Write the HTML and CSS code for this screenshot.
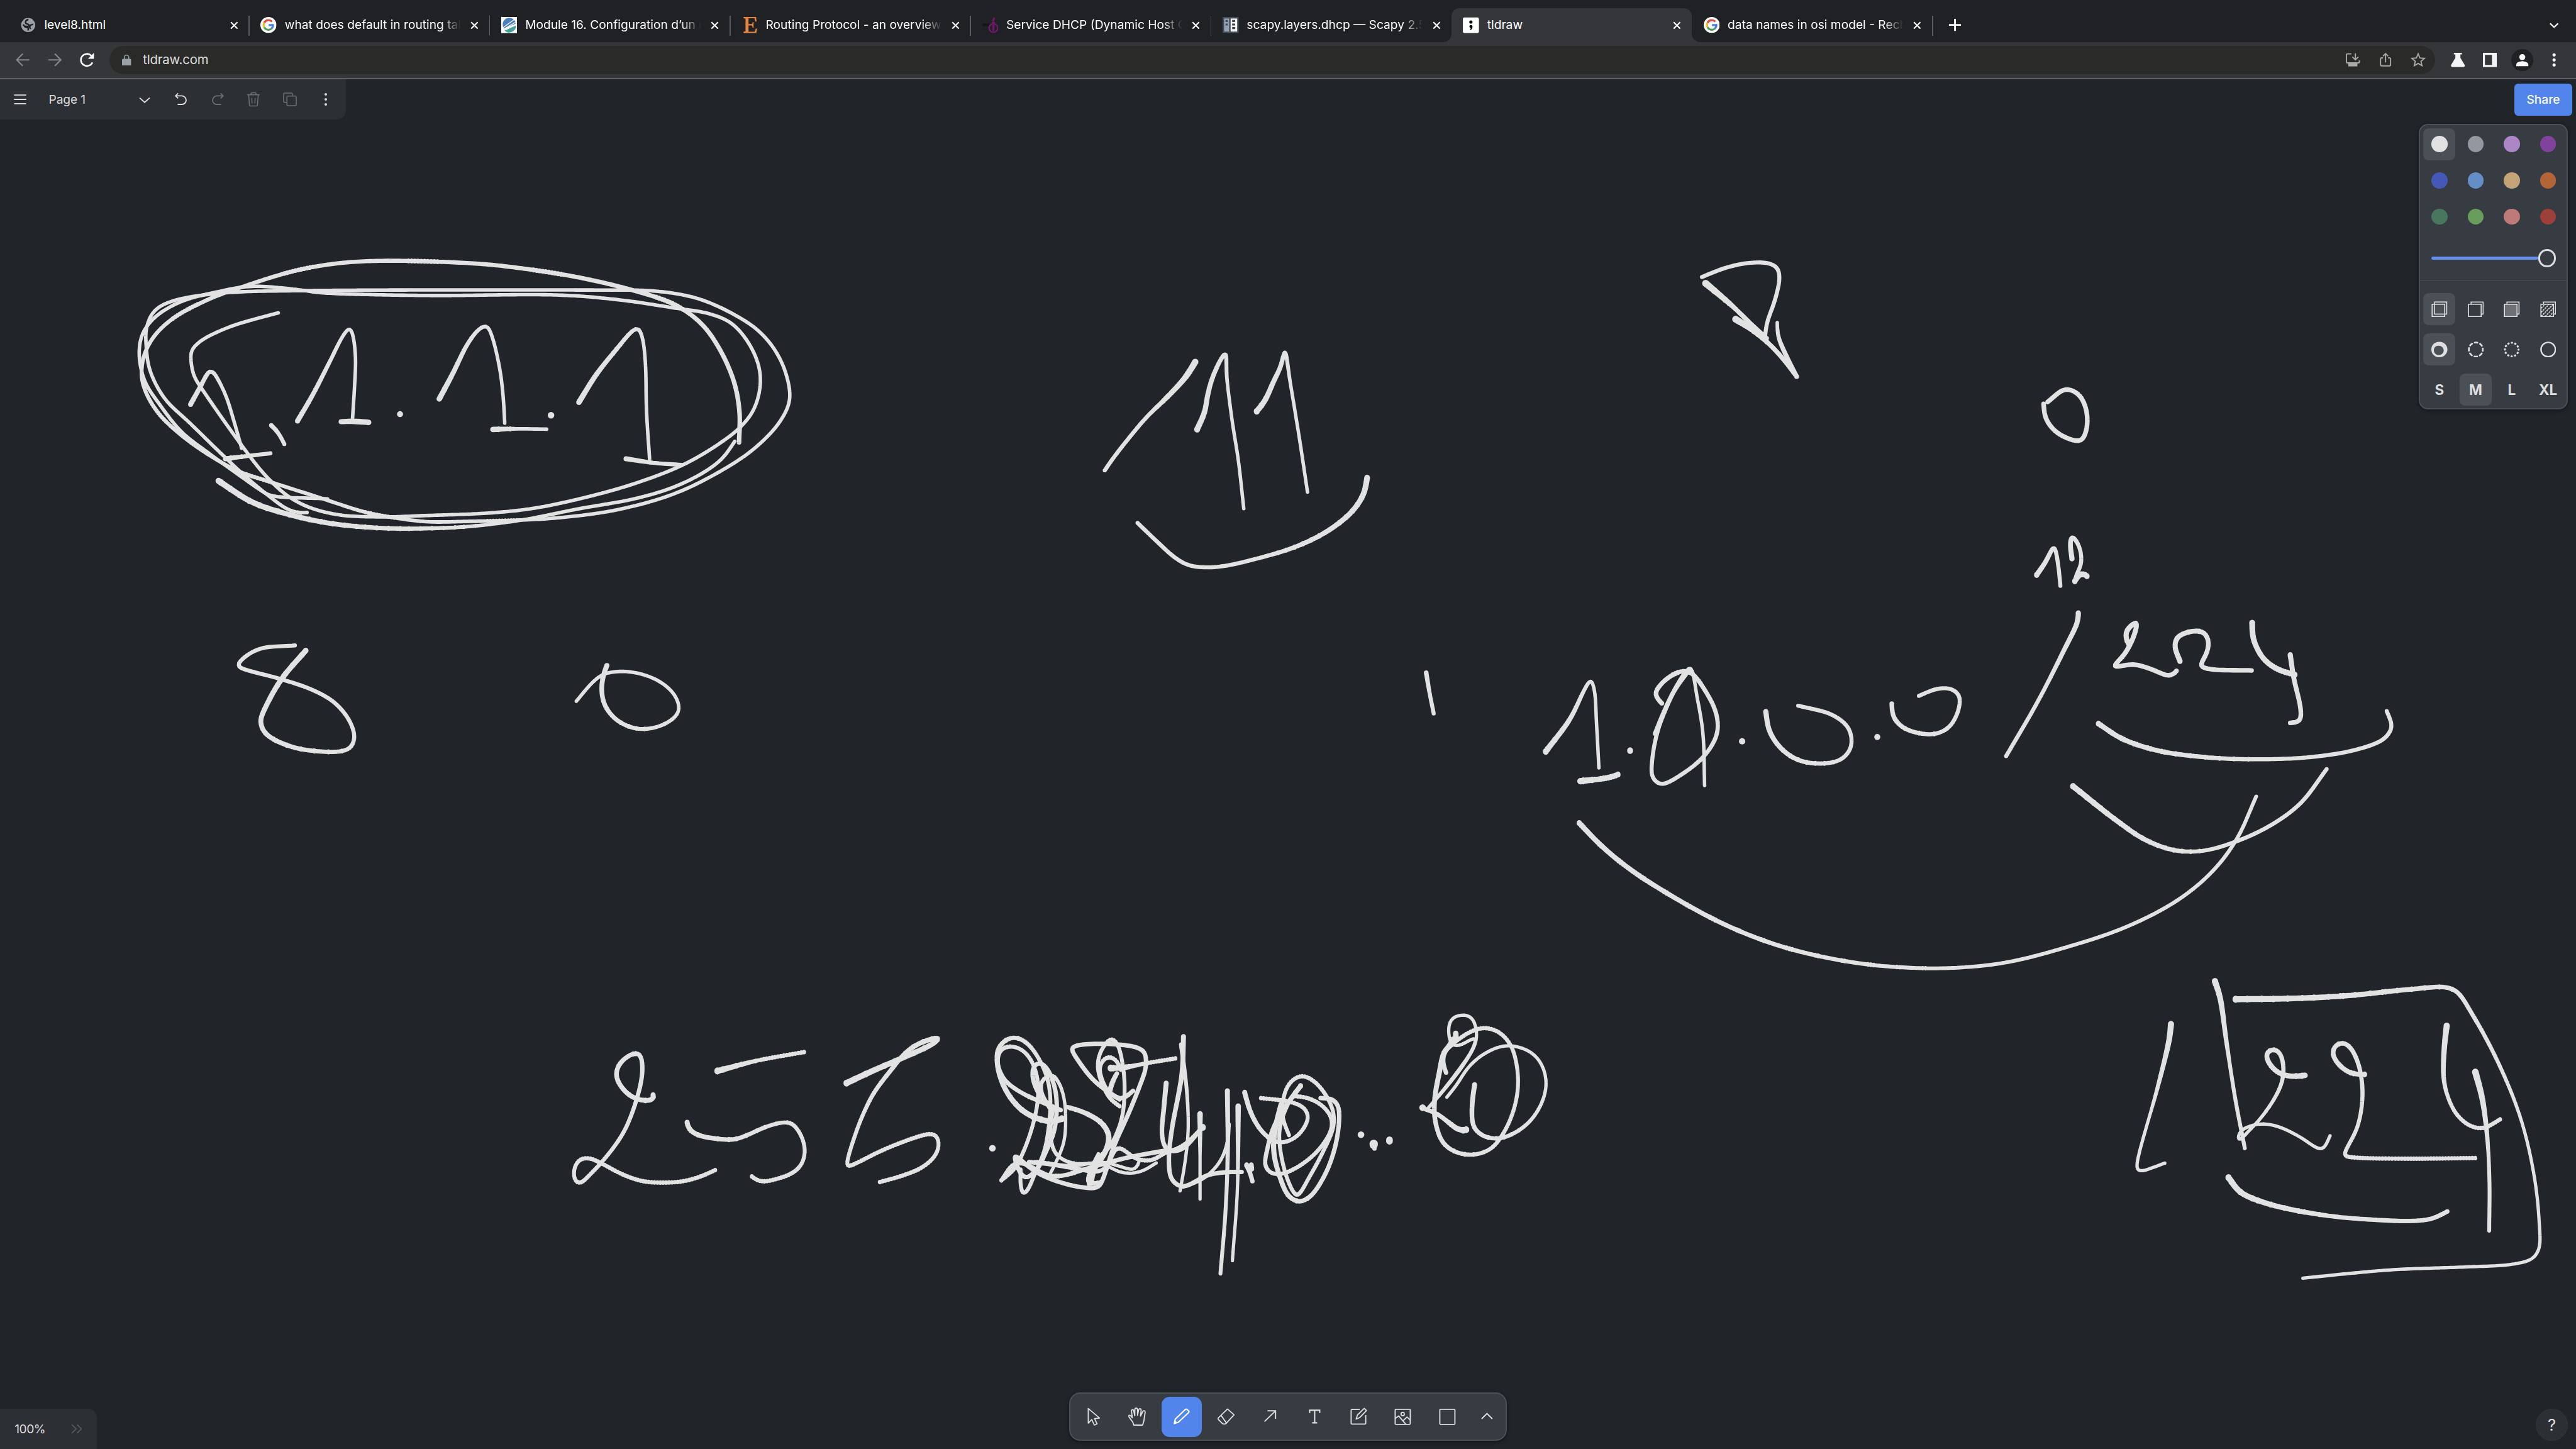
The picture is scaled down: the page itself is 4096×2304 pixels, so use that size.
FILE: index.html
```html
<!DOCTYPE html>
<html lang="en">
<head>
<meta charset="utf-8">
<title>tldraw</title>
<link rel="stylesheet" href="styles.css">
</head>
<body>
<div class="app">
<svg class="defs" width="0" height="0">
  <symbol id="google" viewBox="0 0 32 32">
    <circle cx="16" cy="16" r="16" fill="#fff"/>
    <path d="M7.6 11.6A9.5 9.5 0 0 1 23 9.2" fill="none" stroke="#dd4b3e" stroke-width="4"/>
    <path d="M7.6 11.6a9.5 9.5 0 0 0 0 8.8" fill="none" stroke="#f5bb1b" stroke-width="4"/>
    <path d="M7.6 20.4a9.5 9.5 0 0 0 14.8 2.6" fill="none" stroke="#4ea254" stroke-width="4"/>
    <path d="M16.5 14h10.6c.5 4-.7 7.6-3.4 10.300l-3.200-2.500c1.300-1 2-2.300 2.300-3.700h-6.300z" fill="#4a7fec"/>
  </symbol>
  <symbol id="close" viewBox="0 0 16 16"><path d="M1.500 1.500l13 13M14.500 1.500l-13 13" fill="none" stroke="#fff" stroke-width="2.600"/></symbol>
</svg>

<header class="tabs">
  <div class="tab">
    <svg class="fav" viewBox="0 0 32 32"><circle cx="16" cy="16" r="14" fill="#9aa0a6"/><path d="M16.500 5c-5 1-6.500 4-5.500 7 1.500 3 6 1 6.500 4.500.3 3-3.500 2.500-7.500 2M6 15l4 5 6 1.500V27M26 14.500l-6 2-1 4.500 2 3" fill="none" stroke="#202124" stroke-width="3"/></svg>
    <span class="title">level8.html</span><svg class="x"><use href="#close"/></svg>
  </div>
  <div class="tab">
    <svg class="fav"><use href="#google"/></svg>
    <span class="title cut">what does default in routing tab</span><svg class="x"><use href="#close"/></svg>
  </div>
  <div class="tab">
    <svg class="fav" viewBox="0 0 32 32"><path d="M0 0h32v32H0z" fill="#fff"/><path d="M3 16a13 13 0 0 1 26-3L5 23a13 13 0 0 1-2-7z" fill="#4c7fc0"/><path d="M6 26l23-9a13 13 0 0 1-23 9z" fill="#45a399"/><path d="M4 21L26 5M5 24L29 10M8 26l21-10" stroke="#fff" stroke-width="1.500"/></svg>
    <span class="title cut">Module 16. Configuration d’un r</span><svg class="x"><use href="#close"/></svg>
  </div>
  <div class="tab">
    <svg class="fav" viewBox="0 0 32 32"><path d="M4 0h25l1 9h-2.500l-2-6.500H14V14h7l1.500-4H24v12h-1.500L21 17h-7v12.500h12l2.500-6.500H31l-1.500 9H4v-2.500l4-1V3.500l-4-1z" fill="#e8853a"/></svg>
    <span class="title cut">Routing Protocol - an overview</span><svg class="x"><use href="#close"/></svg>
  </div>
  <div class="tab">
    <svg class="fav" viewBox="0 0 32 32"><path d="M0 13h14v5H0z" fill="#17141a"/><circle cx="22" cy="22" r="8.500" fill="none" stroke="#6b1a6a" stroke-width="3"/><path d="M22 16v12M24 1l-3 8M19 12h6" stroke="#6b1a6a" stroke-width="4"/></svg>
    <span class="title cut">Service DHCP (Dynamic Host C</span><svg class="x"><use href="#close"/></svg>
  </div>
  <div class="tab">
    <svg class="fav" viewBox="0 0 32 32"><path d="M0 0h32v32H0z" fill="#454f58"/><path d="M3 3h10v26H3z" fill="#92a3b4"/><path d="M16 3h13v26H16z" fill="#f2f2f2"/><path d="M6 6h4v4H6zM6 13h4v4H6zM19 6h6v4h-6zM19 13h6v4h-6zM19 20h6v4h-6z" fill="#3d4750"/></svg>
    <span class="title cut">scapy.layers.dhcp — Scapy 2.5</span><svg class="x"><use href="#close"/></svg>
  </div>
  <div class="tab active">
    <svg class="fav" viewBox="0 0 32 32"><rect y="1" width="32" height="31" rx="3" fill="#fff"/><circle cx="16" cy="10" r="3.200"/><path d="M13 19a3 3 0 0 1 6.200 0c0 3-1.500 6-4 7l-1-1.200c1-.8 1.700-1.800 1.800-3A3 3 0 0 1 13 19z"/></svg>
    <span class="title">tldraw</span><svg class="x"><use href="#close"/></svg>
  </div>
  <div class="tab">
    <svg class="fav"><use href="#google"/></svg>
    <span class="title cut">data names in osi model - Rech</span><svg class="x"><use href="#close"/></svg>
  </div>
  <svg class="plus" viewBox="0 0 24 24"><path d="M12 0v24M0 12h24" stroke="#fff" stroke-width="3.600"/></svg>
  <svg class="tabsearch" viewBox="0 0 18 11"><path d="M1 1.500l8 7.500 8-7.500" fill="none" stroke="#fff" stroke-width="2.800"/></svg>
</header>

<div class="toolbar">
  <svg class="nav" viewBox="0 0 28 28"><path d="M27 14H3M14 2L2 14l12 12" fill="none" stroke="#87898c" stroke-width="2.600"/></svg>
  <svg class="nav" viewBox="0 0 28 28"><path d="M1 14h24M14 2l12 12-12 12" fill="none" stroke="#87898c" stroke-width="2.600"/></svg>
  <svg class="nav" viewBox="0 0 28 28"><path d="M25 19A12 12 0 1 1 22.500 5.500L25 8" fill="none" stroke="#fff" stroke-width="3.200"/><path d="M28 0v12H16z" fill="#fff"/></svg>
  <div class="omnibox">
    <svg class="lock" viewBox="0 0 18 22"><path d="M4.500 9V5.500a4.500 4.500 0 0 1 9 0V9" fill="none" stroke="#9aa0a6" stroke-width="2"/><rect y="8" width="18" height="14" rx="2" fill="#9aa0a6"/></svg>
    <span class="url">tldraw.com</span>
    <svg class="oi" viewBox="0 0 28 28"><g fill="none" stroke="#a8a9a9" stroke-width="2.400"><path d="M11 2H3.500Q1.200 2 1.200 4v14q0 2 2.300 2h21q2.300 0 2.300-2v-3M19 1v12M13 8l6 6 6-6"/></g><path d="M5 21h18v6H5z" fill="#a8a9a9"/></svg>
    <svg class="oi" viewBox="0 0 28 28"><path d="M9 10H6.500Q4 10 4 12.500v11Q4 26 6.500 26h15q2.500 0 2.500-2.500v-11Q24 10 21.500 10H19M14 19V2M9 6.500l5-5 5 5" fill="none" stroke="#a8a9a9" stroke-width="2.400"/></svg>
    <svg class="oi star" viewBox="0 0 28 28"><path d="M14 3l3.300 7.600 8.200.8-6.200 5.500 1.800 8.100L14 20.800 6.900 25l1.800-8.100-6.200-5.500 8.200-.8z" fill="none" stroke="#a8a9a9" stroke-width="2.200"/></svg>
  </div>
  <svg class="ti" viewBox="0 0 28 28"><path d="M6 0h16v3h-3v7l8.500 14q1 4-2 4h-23q-3 0-2-4L9 10V3H6z" fill="#f4f5f7"/></svg>
  <svg class="ti" viewBox="0 0 28 28"><path d="M0 0h28v28H0zM4 4v20h14V4z" fill="#f4f5f7" fill-rule="evenodd"/></svg>
  <svg class="avatar" viewBox="0 0 44 44"><circle cx="22" cy="22" r="22" fill="#202124"/><circle cx="22" cy="16" r="6" fill="#fff"/><path d="M10 34v-3q0-6 12-7 12 1 12 7v3z" fill="#fff"/></svg>
  <svg class="dots" viewBox="0 0 8 28"><g fill="#f4f5f7"><circle cx="4" cy="4" r="3.200"/><circle cx="4" cy="14" r="3.200"/><circle cx="4" cy="24" r="3.200"/></g></svg>
</div>

<main class="editor">
  <svg class="canvas" id="canvas" viewBox="0 158 5120 2722"></svg>

  <div class="top">
    <div class="menu">
      <svg class="m" viewBox="0 0 30 30"><path d="M3 6.500h24M3 15h24M3 23.500h24" stroke="#dedede" stroke-width="2.200"/></svg>
      <span class="page">Page 1</span>
      <svg class="m chev" viewBox="0 0 30 30"><path d="M5 12l10 9 10-9" fill="none" stroke="#dedede" stroke-width="2.400"/></svg>
      <svg class="m" viewBox="0 0 30 30"><path d="M9 3L4 8l5 5M4 8h12a9 9 0 0 1 9 8.500A8.500 8.500 0 0 1 16.500 25H8" fill="none" stroke="#dedede" stroke-width="2.400"/></svg>
      <svg class="m" viewBox="0 0 30 30"><path d="M21 3l5 5-5 5M26 8H14a9 9 0 0 0-9 8.500A8.500 8.500 0 0 0 13.500 25H22" fill="none" stroke="#6d7074" stroke-width="2.200"/></svg>
      <svg class="m" viewBox="0 0 30 30"><path d="M2.500 6h25M10 6V4q0-2 2-2h6q2 0 2 2v2M5.500 6l1.500 20q.2 2 2 2h12q1.800 0 2-2l1.500-20M11.500 12l.8 11M18.500 12l-.8 11" fill="none" stroke="#6d7074" stroke-width="1.900"/></svg>
      <svg class="m" viewBox="0 0 30 30"><g fill="none" stroke="#6d7074" stroke-width="2"><rect x="9" y="8.500" width="18.500" height="19" rx="2"/><path d="M9 21H4.500Q2.500 21 2.500 19V4.500q0-2 2-2H18q2 0 2 2v4"/></g></svg>
      <svg class="m" viewBox="0 0 30 30"><g fill="#dedede"><circle cx="15" cy="5" r="2.500"/><circle cx="15" cy="15" r="2.500"/><circle cx="15" cy="25" r="2.500"/></g></svg>
    </div>
    <div class="right">
      <button class="share">Share</button>
      <section class="styles">
        <div class="grid colors">
          <i class="cell on"><b class="c1"></b></i><i class="cell"><b class="c2"></b></i><i class="cell"><b class="c3"></b></i><i class="cell"><b class="c4"></b></i>
          <i class="cell"><b class="c5"></b></i><i class="cell"><b class="c6"></b></i><i class="cell"><b class="c7"></b></i><i class="cell"><b class="c8"></b></i>
          <i class="cell"><b class="c9"></b></i><i class="cell"><b class="c10"></b></i><i class="cell"><b class="c11"></b></i><i class="cell"><b class="c12"></b></i>
        </div>
        <div class="slider"><span class="track"></span><span class="thumb"></span></div>
        <div class="grid kinds">
          <i class="cell on"><svg viewBox="0 0 32 32"><g fill="none" stroke="#dedede" stroke-width="2"><rect x="1.500" y="6" width="25" height="24.500"/><rect x="6.500" y="1.500" width="24" height="24"/></g></svg></i>
          <i class="cell"><svg viewBox="0 0 32 32"><g fill="none" stroke="#dedede" stroke-width="2"><rect x="1.500" y="6" width="25" height="24.500"/><path d="M6.500 6V1.500h24v24h-4"/></g></svg></i>
          <i class="cell"><svg viewBox="0 0 32 32"><g fill="none" stroke="#dedede" stroke-width="2"><rect x="1.500" y="6" width="25" height="24.500" fill="#6d7075"/><path d="M6.500 6V1.500h24v24h-4"/></g></svg></i>
          <i class="cell"><svg viewBox="0 0 32 32"><g fill="none" stroke="#dedede" stroke-width="2"><rect x="1.500" y="6" width="25" height="24.500"/><path d="M6.500 6V1.500h24v24h-4"/><path d="M2 14l8-8M2 22L18 6M2 30L26 6M10 30l16-16M18 30l8-8" stroke-dasharray="3.500 1.600"/></g></svg></i>
          <i class="cell on"><svg viewBox="0 0 32 32"><path d="M16 0.500C26 .5 32 8 32 16s-7 15.500-16 15.500S0 25 0 16 6 .5 16 .5zM14 8.500c-5.500 0-9 4-9 9s4 9.500 9.500 9.500 10-4 10-9-4-9.500-10.500-9.500z" fill="#dedede" fill-rule="evenodd"/></svg></i>
          <i class="cell"><svg viewBox="0 0 32 32"><circle cx="16" cy="16" r="14" fill="none" stroke="#dedede" stroke-width="3.400" stroke-linecap="round" stroke-dasharray="5.500 5.495" stroke-dashoffset="2.750"/></svg></i>
          <i class="cell"><svg viewBox="0 0 32 32"><circle cx="16" cy="16" r="13.500" fill="none" stroke="#dedede" stroke-width="4" stroke-linecap="round" stroke-dasharray="0.600 6.469" stroke-dashoffset=".3"/></svg></i>
          <i class="cell"><svg viewBox="0 0 32 32"><circle cx="16" cy="16" r="14.300" fill="none" stroke="#dedede" stroke-width="3"/></svg></i>
          <i class="cell">S</i><i class="cell on">M</i><i class="cell">L</i><i class="cell">XL</i>
        </div>
      </section>
    </div>
  </div>

  <div class="bottom">
    <div class="zoombox"><span>100%</span><svg viewBox="0 0 22 20"><path d="M1.500 1.500l8.500 8.500-8.500 8.500M12 1.500l8.500 8.500-8.500 8.500" fill="none" stroke="#5c5f63" stroke-width="2"/></svg></div>
    <div class="tools">
      <i class="tool"><svg viewBox="0 0 36 36"><path d="M8 2v29l7-7 5 11 5.500-2.500L20.500 22l10-1z" fill="none" stroke="#dedede" stroke-width="2.200" stroke-linejoin="round"/></svg></i>
      <i class="tool"><svg viewBox="0 0 36 36"><path d="M11 35L9 29 2 19.500q-2-3.500 0-4 2.500-.6 6 5L6.500 8q-.5-3.500 1.800-3.800Q10.600 4 11 7l2 9.500L13 5q0-3.700 2.700-3.700T18.500 5v10.500L20.500 5q.8-3 3-2.700 2.300.3 2 3.700L24.500 17l4-8.500q1.300-2.700 3.300-2 2.200.8 1.700 3.500L31 27l-2.500 8z" fill="none" stroke="#dedede" stroke-width="2.300" stroke-linejoin="round"/></svg></i>
      <i class="tool draw"><svg viewBox="0 0 36 36"><path d="M4 32l2-9L26.500 3.500q1.500-1 3 .5l3 3q1.500 1.500 0 3L12 29.500z M4.500 31l3-4" fill="none" stroke="#fff" stroke-width="2.600" stroke-linejoin="round"/></svg></i>
      <i class="tool"><svg viewBox="0 0 36 36"><path d="M21 3L34 14.500 18.500 31.500q-2 1.500-4 1.500t-4-1.500L3 24q-1.500-1.700 0-3.500zM8 15.500L19 31" fill="none" stroke="#dedede" stroke-width="2.300" stroke-linejoin="round"/></svg></i>
      <i class="tool"><svg viewBox="0 0 36 36"><path d="M7 28L28.500 7M13 6.500h16v16" fill="none" stroke="#dedede" stroke-width="2.400"/></svg></i>
      <i class="tool"><svg viewBox="0 0 36 36"><path d="M8 11V5.500h20V11M18 5.500V30.500M13 30.500h10" fill="none" stroke="#dedede" stroke-width="2.600"/></svg></i>
      <i class="tool"><svg viewBox="0 0 36 36"><path d="M20 4H5Q3 4 3 6v25q0 2 2 2h25q2 0 2-2V15M13 23l2.500-8L29 1.800l4.500 4.400L20 20z" fill="none" stroke="#dedede" stroke-width="2.300" stroke-linejoin="round"/></svg></i>
      <i class="tool"><svg viewBox="0 0 36 36"><g fill="none" stroke="#dedede" stroke-width="2.300"><rect x="3" y="3.500" width="30" height="30" rx="1.500"/><circle cx="18" cy="13" r="3.300"/><path d="M3 22l7-5L24 33M18 27l8.500-8 6.500 6"/></g></svg></i>
      <i class="tool"><svg viewBox="0 0 36 36"><rect x="3" y="3.500" width="30" height="30" rx="1.500" fill="none" stroke="#dedede" stroke-width="2.300"/></svg></i>
      <i class="tool more"><svg viewBox="0 0 36 36"><path d="M7.500 22.500L18 12l10.500 10.500" fill="none" stroke="#dedede" stroke-width="2.400"/></svg></i>
    </div>
    <div class="help">?</div>
  </div>
</main>
</div>
<script src="strokes.js"></script>
</body>
</html>
```
FILE: styles.css
```css
* { box-sizing: border-box; }

html, body { height: 100%; overflow: hidden; }
body { margin: 0; background: #212529; }

/* The interface is laid out at 5120x2880 and shown at 80%. */
.app {
  zoom: 0.8;
  width: 5120px;
  height: 2880px;
  display: flex;
  flex-direction: column;
  overflow: hidden;
  background: #212529;
  font-family: Inter, "Liberation Sans", sans-serif;
  font-size: 24px;
  color: #dedede;
}

svg { display: block; flex: none; }
i { font-style: normal; }
.defs { position: absolute; }

/* Tab strip */
.tabs {
  height: 84px;
  flex: none;
  display: flex;
  align-items: flex-end;
  padding-left: 17px;
  background: #202124;
  color: #fff;
}
.tab {
  position: relative;
  width: 478px;
  height: 68px;
  display: flex;
  align-items: center;
  padding: 0 22px 0 23px;
}
.tab::after {
  content: "";
  position: absolute;
  right: -1px;
  top: 15px;
  width: 2px;
  height: 40px;
  background: #5a5b5e;
}
.tab.active { background: #35363a; border-radius: 16px 16px 0 0; }
.tab.active::before, .tab.active::after {
  content: "";
  position: absolute;
  top: auto;
  bottom: 0;
  width: 16px;
  height: 16px;
}
.tab.active::before { left: -16px; background: radial-gradient(circle at 0 0, #202124 15.5px, #35363a 16.5px); }
.tab.active::after { right: -16px; background: radial-gradient(circle at 100% 0, #202124 15.5px, #35363a 16.5px); }
.tab:has(+ .active)::after { display: none; }
.fav { width: 32px; height: 32px; margin-right: 16px; }
.title { width: 352px; overflow: hidden; white-space: nowrap; font-size: 24px; line-height: 34px; }
.cut {
  -webkit-mask-image: linear-gradient(90deg, #000 310px, transparent 350px);
  mask-image: linear-gradient(90deg, #000 310px, transparent 350px);
}
.x { width: 16px; height: 16px; margin-left: 17px; }
.plus { width: 24px; height: 24px; margin: 0 0 22px 33px; }
.tabsearch { width: 18px; height: 11px; margin: 0 35px 28px auto; }

/* Address bar */
.toolbar {
  height: 74px;
  flex: none;
  display: flex;
  align-items: center;
  padding: 0 0 1px 31px;
  background: #35363a;
  border-bottom: 2.5px solid #5f6063;
}
.nav { width: 28px; height: 28px; margin-right: 36px; }
.omnibox {
  width: 4623px;
  height: 56px;
  margin-left: -6px;
  margin-right: 31px;
  display: flex;
  align-items: center;
  padding: 0 19px 0 26px;
  border-radius: 28px;
  background: #2a2a29;
}
.lock { width: 18px; height: 22px; margin-right: 23px; }
.url { margin-right: auto; font-size: 25.5px; letter-spacing: -0.2px; line-height: 40px; }
.oi { width: 28px; height: 28px; margin-left: 36px; }
.star { width: 30px; height: 30px; }
.ti { width: 28px; height: 28px; margin-right: 36px; }
.avatar { width: 44px; height: 44px; margin-left: -8px; }
.dots { width: 8px; height: 28px; margin-left: 38px; }

/* Editor */
.editor {
  position: relative;
  flex: 1;
  min-height: 0;
  display: flex;
  flex-direction: column;
  justify-content: space-between;
}
.canvas { position: absolute; inset: 0; width: 5120px; height: 2722px; fill: #e2e2e2; }
.top { position: relative; display: flex; justify-content: space-between; align-items: flex-start; }
.menu {
  width: 688px;
  height: 80px;
  display: flex;
  align-items: center;
  padding: 0 0 1px 25px;
  border-radius: 0 0 18px 0;
  background: #2c2f34;
}
.m { width: 30px; height: 30px; margin-right: 42px; }
.page { flex: none; width: 175px; letter-spacing: -0.2px; }
.chev { margin-right: 43px; }
.right { display: flex; flex-direction: column; align-items: flex-end; }
.share {
  width: 114px;
  height: 64px;
  margin: 8px 8px 16px 0;
  padding: 0;
  border: 0;
  border-radius: 8px;
  background: #5285ec;
  color: #fff;
  font: 500 24px Inter, "Liberation Sans", sans-serif;
}
.styles {
  width: 296px;
  height: 568px;
  margin-right: 16px;
  border: 2.5px solid #495057;
  border-radius: 18px;
  background: #373b42;
  box-shadow: 0 2px 8px rgba(0, 0, 0, .45);
}
.grid { display: grid; grid-template-columns: repeat(4, 64px); column-gap: 8px; padding-left: 6px; }
.colors { padding-top: 6px; row-gap: 8px; }
.kinds { padding-top: 23px; row-gap: 16px; font-size: 28px; font-weight: 700; }
.cell { height: 64px; display: flex; align-items: center; justify-content: center; border-radius: 11px; }
.cell.on { background: #4b4f56; }
.cell svg, .cell b { width: 32px; height: 32px; }
.cell b { border-radius: 50%; }
.c1 { background: #e1e1e1; }
.c2 { background: #9398a0; }
.c3 { background: #ad86c6; }
.c4 { background: #80439d; }
.c5 { background: #4558b8; }
.c6 { background: #638fc6; }
.c7 { background: #c4a376; }
.c8 { background: #b36538; }
.c9 { background: #49775d; }
.c10 { background: #689d5e; }
.c11 { background: #bd7a78; }
.c12 { background: #9d4039; }
.slider {
  height: 97px;
  display: flex;
  align-items: center;
  padding: 6px 0 0 22px;
  border-bottom: 2px solid #495057;
}
.track { width: 212px; height: 6px; border-radius: 3px; background: #6390ee; }
.thumb { width: 36px; height: 36px; border: 4px solid #dedede; border-radius: 50%; background: #373b42; }

.bottom { position: relative; display: grid; grid-template-columns: 1fr auto 1fr; align-items: end; }
.zoombox {
  width: 192px;
  height: 80px;
  display: flex;
  align-items: center;
  justify-content: space-between;
  padding: 0 29px 0 29px;
  border-radius: 0 18px 0 0;
  background: #2c2f34;
}
.zoombox span { letter-spacing: -0.6px; }
.zoombox svg { width: 22px; height: 20px; }
.tools {
  height: 96px;
  margin-bottom: 16px;
  display: flex;
  align-items: center;
  gap: 8px;
  padding: 0 5.5px;
  border: 2.5px solid #495057;
  border-radius: 22px;
  background: #373b42;
  box-shadow: 0 2px 8px rgba(0, 0, 0, .45);
}
.tool { width: 80px; height: 80px; display: flex; align-items: center; justify-content: center; border-radius: 16px; }
.tool svg { width: 36px; height: 36px; }
.draw { background: #5285ec; }
.more { width: 63px; }
.help {
  justify-self: end;
  width: 64px;
  height: 64px;
  margin: 0 16px 16px 0;
  display: flex;
  align-items: center;
  justify-content: center;
  border-radius: 50%;
  border: 2px solid #33373b;
  background: #2c2f34;
  font-size: 32px;
}
```
FILE: strokes.js
```js
// Freehand strokes. Each group has an origin, scale and pen weight; each stroke
// is [start width, end width, "x,y x,y ..."]. A single point draws a dot.
const groups = [
  { at: [240, 480], scale: [0.8673, 0.676], pen: 1, strokes: [
    [12, 7, "224,703 300,765 380,800 480,828 600,842 700,843 800,837 920,818 1050,785 1180,755 1270,720 1340,675 1380,635 1407,587"],
    [9, 7, "1417,590 1418,500 1405,410 1370,310 1330,240 1270,185 1180,145 1050,105 900,75 800,63 600,56 500,63 400,85 280,132 200,170 120,225 75,280 52,340 48,400 60,450 90,510 140,570 200,625 270,675 340,705 450,750 560,795 620,810 700,823 800,822 920,818 1000,812 1130,790 1260,745 1360,685 1450,610 1510,530 1533,465 1525,390 1500,320 1460,260 1400,210 1330,170 1270,152 1200,143 1100,142 600,142 400,144 280,147 200,155 130,170 90,190 70,215 58,260 58,300 66,375 100,460 160,535 240,635 290,695 340,748 380,785 405,796 427,796"],
    [7, 7, "474,756 340,745 320,730 270,685 200,620 140,560 90,480 55,410 42,330 50,270 80,220 140,175 230,145 280,133 320,131 400,140 460,150 560,155 720,158 1010,157 1150,172 1270,195 1350,212 1400,240 1440,300 1463,370 1465,430 1450,495 1420,545 1370,595 1290,655 1180,710 1070,750 950,783 850,797 700,805 600,809 500,803 430,780 380,745 330,685 275,595 190,440 168,395 161,350 162,320 185,290 250,250 300,230 361,209"],
    [10, 7, "160,478 185,420 200,385 207,378 215,388 240,450 260,530 277,607"],
    [10, 8, "240,638 290,630 343,622"],
    [9, 8, "345,540 360,560 375,595"],
    [10, 7, "405,527 440,450 480,350 510,275 525,253 532,275 538,340 536,420 531,523"],
    [10, 11, "505,529 535,528 568,531"],
    [12, 12, "640,507"],
    [11, 7, "730,462 760,390 795,300 820,258 838,245 850,275 868,370 876,450 880,533"],
    [11, 7, "853,552 900,550 976,551"],
    [13, 13, "986,510"],
    [11, 7, "1050,472 1090,390 1140,310 1170,265 1185,253 1195,280 1202,350 1205,500 1212,640"],
    [10, 8, "1158,638 1220,650 1285,656"],
    [11, 8, "424,1202 370,1283 335,1360 320,1410 328,1440 350,1463 400,1488 450,1498 500,1499 525,1490 536,1460 525,1410 490,1355 440,1318 370,1287 275,1253 267,1245 285,1220 320,1196 399,1187"],
    [10, 7, "1114,1246 1106,1275 1102,1320 1110,1365 1135,1405 1170,1428 1200,1433 1240,1422 1272,1395 1280,1370 1268,1330 1235,1293 1190,1270 1145,1263 1105,1272 1080,1297 1044,1351"]
  ] },
  { at: [1100, 1980], scale: [0.574, 0.3827], pen: 1.1, strokes: [
    [9, 7, "345,513 347,530 335,540 310,540 270,520 235,470 217,410 225,360 250,318 285,293 300,300 308,360 305,430 285,550 245,700 190,820 130,920 90,972 75,960 70,915 80,865 100,840 130,842 170,870 240,925 310,960 380,967 450,960 510,935 560,902"],
    [11, 7, "568,387 700,335 868,289"],
    [9, 7, "463,655 470,690 500,720 560,738 625,743 660,727 740,675 790,655 820,655 845,690 865,750 871,810 860,870 830,915 780,945 722,962 700,950 687,935"],
    [11, 7, "1015,450 1100,390 1200,325 1290,265 1320,240 1335,215 1290,230 1245,262 1205,315 1170,380 1110,500 1070,620 1040,740 1020,840 1016,884 1050,865 1130,805 1220,750 1290,717 1320,715 1335,760 1325,820 1280,885 1210,930 1130,964"],
    [12, 12, "1520,788"]
  ] },
  { at: [1900, 1980], scale: [0.7653, 0.3827], pen: 1.1, strokes: [
    [12, 12, "1052,718"],
    [15, 8, "1085,768 1087,790"],
    [12, 12, "1126,744 1126,752"],
    [11, 7, "402,372 430,371 500,345 570,322"],
    [11, 7, "275,635 250,650 200,625 160,570 125,470 107,350 110,270 130,225 155,213 180,235 205,290 235,410 245,520 243,640 230,800 205,920 185,1010 175,1028 168,980 168,900"],
    [8, 7, "272,590 230,555 170,500 125,430 108,340 115,280 140,258 170,275 195,330 212,430 212,550 195,700 170,830 150,900 118,955"],
    [8, 8, "260,590 220,520 200,430 200,370 215,342 235,370 255,460 262,560 255,700 235,800 210,900 180,945 165,910 152,825 180,870 215,920 270,965 330,992 370,990 385,930 410,780 450,600 480,450 493,370 490,290 470,265 400,247 330,250 300,265 320,340 360,440 400,500 430,533 460,490"],
    [8, 6, "250,600 222,500 222,440 248,405 265,440 280,520 285,640 280,760 260,860 245,920"],
    [7, 8, "118,955 150,870 180,870 240,930 280,930 330,900 400,860 450,835 550,798"],
    [8, 7, "190,860 240,870 300,890 370,910 390,890 420,785 470,845 510,850 545,810 570,795 600,760 640,680"],
    [8, 6, "210,860 300,880 380,860 430,885 465,900 475,860"],
    [8, 10, "290,575 330,600 380,660 398,730 385,820 360,890 350,970"],
    [8, 6, "250,600 245,720 260,820 300,865 380,870 430,915 480,910 520,865"],
    [7, 7, "425,570 400,530 375,430 368,350 380,270 405,217 420,250 435,380 438,500 430,640 400,780 370,840 345,975"],
    [7, 7, "425,535 400,505 383,450 373,370 385,325 402,312 420,340 428,380"],
    [8, 9, "418,400 405,450 400,490"],
    [7, 7, "370,820 350,900 342,970 375,965"],
    [9, 8, "546,452 540,580 535,720 545,790 565,805 590,790 640,680"],
    [9, 8, "591,210 587,400 560,700 553,850 560,950 585,988 610,975 650,930 700,913 742,912"],
    [8, 6, "585,250 600,500 603,700 595,860 582,1010"],
    [10, 6, "634,610 634,800 634,1052"],
    [11, 11, "641,680"],
    [9, 7, "705,492 706,800 700,1120 687,1438"],
    [10, 6, "733,570 731,1000 718,1372"],
    [7, 6, "709,665 705,760 685,860 640,950 590,990"],
    [9, 7, "750,500 765,600 790,690 820,745 845,760 880,735 905,680 915,620 905,580 870,548 792,528"],
    [9, 8, "755,877 762,905 770,960"],
    [9, 9, "767,877 768,895"],
    [9, 7, "895,465 860,560 825,680 808,800 803,880 820,920 850,920 900,870 945,790 975,690 975,630 950,565 910,525 880,518"],
    [10, 8, "845,560 830,680 825,800 840,930 865,1040 892,1068 920,1040 960,920 985,780 995,650 993,570 980,535 947,528"],
    [7, 7, "865,720 850,640 848,560 860,470 880,425 900,412 930,440 960,510 980,600 980,680 950,820 920,930 885,1035 865,970 845,830 840,700 855,590 870,530"],
    [9, 6, "1347,460 1342,530 1340,620 1345,680 1370,725 1410,738 1450,710 1490,650 1520,560 1533,460 1525,370 1500,300 1460,262 1420,258 1370,300 1330,370 1300,460 1275,523"],
    [10, 7, "1298,192 1297,230 1270,280 1255,400 1243,540 1245,650 1265,760 1300,810 1345,822 1390,790 1425,700 1450,580 1460,460 1455,340 1440,250 1410,185 1370,163 1330,190 1297,235"],
    [8, 7, "1273,396 1265,340 1270,290 1290,220"],
    [11, 8, "1325,692 1310,697 1280,655 1250,610 1225,590 1212,580"],
    [12, 12, "1212,578"],
    [6, 6, "1222,590 1260,500 1310,370 1340,280 1350,215 1300,260 1285,240 1280,150 1290,110 1320,95 1340,110 1352,180 1350,240 1320,350 1270,480 1222,590"]
  ] },
  { at: [2160, 480], scale: [0.918, 0.4464], pen: 1.15, strokes: [
    [11, 7, "235,535 215,600 175,690 130,780 85,890 55,970 39,1018"],
    [10, 6, "239,835 255,760 262,680 275,590 300,497 303,600 315,800 328,970 340,1188"],
    [10, 6, "368,755 385,710 405,620 420,555 429,490 440,620 460,870 478,1115"],
    [10, 7, "607,1052 600,1120 575,1200 520,1290 450,1360 370,1410 300,1443 260,1450 220,1440 190,1405 160,1350 110,1252"],
    [7, 7, "1332,157 1380,118 1430,95 1475,95 1495,115 1500,160 1490,260 1473,360 1468,430"],
    [12, 8, "1340,185 1400,290 1440,370 1472,430"],
    [12, 8, "1405,345 1440,390 1485,470 1515,540 1537,600"],
    [6, 8, "1495,360 1497,420 1515,510 1537,600"]
  ] },
  { at: [3000, 740], scale: [1.148, 0.778], pen: 1.15, strokes: [
    [8, 8, "925,80 928,115 945,150 970,170 990,175 1000,140 998,90 985,55 963,42 932,75"],
    [9, 7, "913,517 930,480 943,445 950,490 954,545"],
    [9, 7, "974,475 971,435 974,418 987,445 990,490 982,515 979,533"],
    [9, 9, "979,533 990,512 1000,520"],
    [9, 7, "985,615 984,635 960,710 915,840 860,980"],
    [9, 8, "1072,692 1066,672 1072,652 1086,638 1082,670 1065,720 1047,751 1080,745 1110,757 1145,775 1155,762"],
    [9, 8, "1161,737 1152,700 1155,678 1180,661 1203,664 1211,690 1205,725 1196,750 1215,758 1285,761"],
    [10, 9, "1286,640 1288,680 1305,730 1330,758 1360,772"],
    [9, 8, "1352,722 1358,780 1370,860 1369,890 1352,895"],
    [9, 7, "1020,897 1060,935 1120,965 1200,982 1290,988 1390,982 1470,962 1515,935 1528,905 1519,865"],
    [10, 7, "976,1057 1050,1143 1100,1193 1150,1220 1200,1222 1260,1197 1320,1155 1370,1100 1415,1013"],
    [9, 6.5, "121,1151 160,1210 210,1270 290,1345 380,1415 480,1470 600,1508 700,1521 780,1520 860,1507 960,1470 1070,1415 1160,1345 1220,1270 1260,1190 1293,1083"],
    [10, 6, "63,968 105,885 130,810 141,785 147,810 151,900 155,1010"],
    [11, 9, "123,1044 175,1034 188,1027"],
    [10, 10, "209,966"],
    [8, 7, "264,845 252,822 270,785 300,762 315,767 340,815 358,870 360,920 340,975 300,1025 262,1052 248,1035 248,980 260,900 285,815 313,757"],
    [9, 6, "253,922 270,860 290,800 313,755 325,830 335,920 338,1055"],
    [11, 11, "403,942"],
    [9, 7, "444,867 450,915 470,960 500,990 540,999 575,988 592,955 588,910 560,875 500,851"],
    [10.5, 10.5, "637,931"],
    [8, 7, "662,846 665,880 685,910 735,924 762,905 778,860 779,825 765,808 740,808 709,826"],
    [8, 7, "-144,767 -138,820 -131,871"]
  ] },
  { at: [4200, 1900], scale: [0.5867, 0.625], pen: 1.1, strokes: [
    [11, 6, "196,217 190,265 150,420 85,640 80,678 92,685 120,677 175,658"],
    [11, 7, "345,80 362,130 385,280 415,460 446,610"],
    [11, 6, "415,137 620,134 800,125 1000,106 1130,99 1165,113 1220,190 1290,310 1360,460 1400,580 1430,720 1443,840 1443,930 1420,962 1350,980 1200,988 950,997 800,1009 643,1024"],
    [10, 6, "650,379 600,382 555,368 525,335 518,310 545,295 565,308 577,350 572,400 545,455 500,515 450,565 425,588 422,570 440,550 500,533 560,542 630,573 708,614 735,571"],
    [9, 7, "852,376 805,372 760,340 743,305 755,282 780,275 805,292 830,340 844,410 842,480 825,550 785,625 785,635 830,641 1000,644 1227,642"],
    [11, 7, "1130,222 1122,290 1120,390 1135,450 1165,505 1210,540 1255,547 1311,519"],
    [12, 7, "1227,368 1250,450 1267,570 1275,720 1274,872"],
    [11, 8, "391,704 430,750 500,780 600,805 750,828 900,839 1010,842 1080,835 1132,812"]
  ] }
];

// Centripetal Catmull-Rom through the points.
function spline(p) {
  if (p.length < 2) return p;
  const ends = [
    [2 * p[0][0] - p[1][0], 2 * p[0][1] - p[1][1]],
    [2 * p.at(-1)[0] - p.at(-2)[0], 2 * p.at(-1)[1] - p.at(-2)[1]]
  ];
  const q = [ends[0], ...p, ends[1]];
  const out = [];
  const gap = (a, b) => Math.max(0.01, Math.sqrt(Math.hypot(b[0] - a[0], b[1] - a[1])));
  const mix = (a, b, ta, tb, t) => [0, 1].map(k => (a[k] * (tb - t) + b[k] * (t - ta)) / (tb - ta));
  for (let i = 1; i < q.length - 2; i++) {
    const [a, b, c, d] = [q[i - 1], q[i], q[i + 1], q[i + 2]];
    const t1 = gap(a, b), t2 = t1 + gap(b, c), t3 = t2 + gap(c, d);
    const n = Math.max(2, Math.ceil(Math.hypot(c[0] - b[0], c[1] - b[1]) / 6));
    for (let s = 0; s < n; s++) {
      const t = t1 + (t2 - t1) * s / n;
      const A = mix(a, b, 0, t1, t), B = mix(b, c, t1, t2, t), C = mix(c, d, t2, t3, t);
      out.push(mix(mix(A, B, 0, t2, t), mix(B, C, t1, t3, t), t1, t2, t));
    }
  }
  out.push(p.at(-1));
  return out;
}

// Rounds corners a little by averaging neighbouring samples.
function soften(pts) {
  return pts.map((p, i) => {
    const k = Math.min(2, i, pts.length - 1 - i);
    const near = pts.slice(i - k, i + k + 1);
    return [0, 1].map(a => near.reduce((sum, q) => sum + q[a], 0) / near.length);
  });
}

const f = v => v.toFixed(1);
const disc = (x, y, r) => `M${f(x - r)} ${f(y)}a${f(r)} ${f(r)} 0 1 1 ${f(2 * r)} 0a${f(r)} ${f(r)} 0 1 1 ${f(-2 * r)} 0z`;

function outline(pts, w0, w1) {
  let d = "";
  const radius = i => {
    const t = Math.min(1, i / Math.max(1, pts.length - 1) * 2);
    return (w0 + (w1 - w0) * t) / 2;
  };
  pts.forEach(([x, y], i) => {
    const r = radius(i);
    d += disc(x, y, r);
    if (i + 1 < pts.length) {
      const [u, v] = pts[i + 1], s = radius(i + 1), l = Math.hypot(u - x, v - y) || 1;
      const nx = (v - y) / l, ny = (x - u) / l;
      d += `M${f(x + nx * r)} ${f(y + ny * r)}L${f(u + nx * s)} ${f(v + ny * s)} ${f(u - nx * s)} ${f(v - ny * s)} ${f(x - nx * r)} ${f(y - ny * r)}z`;
    }
  });
  return d;
}

const canvas = document.getElementById("canvas");
for (const g of groups) {
  for (const [w0, w1, text] of g.strokes) {
    const pts = text.split(" ").map(s => s.split(",").map((v, k) => g.at[k] + v * g.scale[k] + k));
    const path = document.createElementNS("http://www.w3.org/2000/svg", "path");
    path.setAttribute("d", outline(soften(spline(pts)), w0 * g.pen, w1 * g.pen));
    canvas.append(path);
  }
}
```
